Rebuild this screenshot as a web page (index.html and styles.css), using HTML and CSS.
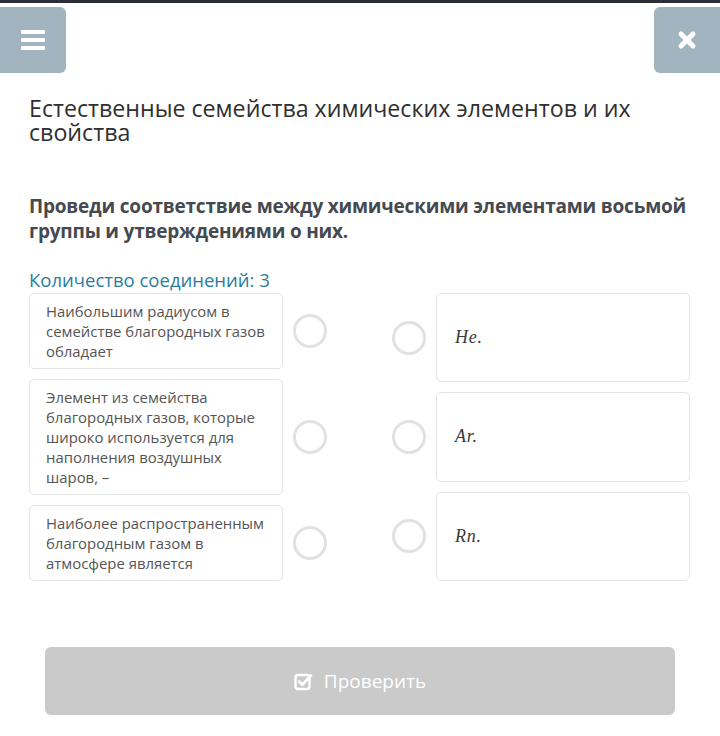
FILE: index.html
```html
<!DOCTYPE html>
<html lang="ru">
<head>
<meta charset="utf-8">
<link rel="stylesheet" href="styles.css">
</head>
<body>
<div class="topline"></div>
<header class="toolbar">
  <button class="tbtn tbtn-left" aria-label="Меню">
    <svg width="24" height="20" viewBox="0 0 24 20"><rect x="0" y="0" width="24" height="4" rx="1" fill="#fff"/><rect x="0" y="8" width="24" height="4" rx="1" fill="#fff"/><rect x="0" y="16" width="24" height="4" rx="1" fill="#fff"/></svg>
  </button>
  <button class="tbtn tbtn-right" aria-label="Закрыть">
    <svg width="20" height="20" viewBox="0 0 20 20"><path d="M4 4 L16 16 M16 4 L4 16" stroke="#fff" stroke-width="5" stroke-linecap="round"/></svg>
  </button>
</header>
<main class="content">
  <h1 class="title">Естественные семейства химических элементов и их свойства</h1>
  <p class="question">Проведи соответствие между химическими элементами восьмой группы и утверждениями о них.</p>
  <div class="count">Количество соединений: 3</div>
  <div class="match">
    <div class="col col-left">
      <div class="item">
        <div class="card card-left">Наибольшим радиусом в семействе благородных газов обладает</div>
        <span class="dot"></span>
      </div>
      <div class="item">
        <div class="card card-left">Элемент из семейства благородных газов, которые широко используется для наполнения воздушных шаров, –</div>
        <span class="dot"></span>
      </div>
      <div class="item">
        <div class="card card-left">Наиболее распространенным благородным газом в атмосфере является</div>
        <span class="dot"></span>
      </div>
    </div>
    <div class="col col-right">
      <div class="item item-grow">
        <span class="dot"></span>
        <div class="card card-right"><span class="math">He.</span></div>
      </div>
      <div class="item item-grow">
        <span class="dot"></span>
        <div class="card card-right"><span class="math">Ar.</span></div>
      </div>
      <div class="item item-grow">
        <span class="dot"></span>
        <div class="card card-right"><span class="math">Rn.</span></div>
      </div>
    </div>
  </div>
  <button class="check">
    <svg width="19" height="19" viewBox="0 0 19 19"><rect x="1.5" y="3" width="14" height="14" rx="2.5" fill="none" stroke="#fff" stroke-width="2.4"/><path d="M5 9.5 L8.3 12.8 L17 3.5" fill="none" stroke="#fff" stroke-width="2.8" stroke-linecap="round" stroke-linejoin="round"/></svg>
    <span>Проверить</span>
  </button>
</main>
</body>
</html>
```

FILE: styles.css
```css
* { box-sizing: border-box; }
html, body { margin: 0; padding: 0; background: #fff; }
body { font-family: "Open Sans", "Noto Sans", sans-serif; color: #333; width: 720px; height: 736px; overflow: hidden; }

.topline { height: 3px; background: #2b2e38; }

.toolbar { display: flex; justify-content: space-between; margin-top: 4px; }
.tbtn { width: 66px; height: 66px; border: 0; padding: 0; background: #a3b4c1; display: flex; align-items: center; justify-content: center; }
.tbtn-left { border-radius: 0 6px 6px 0; }
.tbtn-right { border-radius: 6px 0 0 6px; }

.content { padding: 0 30px 0 29px; }

.title { margin: 23px 0 0; font-size: 23.2px; line-height: 24px; font-weight: 400; color: #2f2f2f; }

.question { margin: 50px 0 0; font-size: 19px; line-height: 25px; font-weight: 700; color: #444a50; letter-spacing: -0.2px; }

.count { margin-top: 23px; font-size: 18.5px; line-height: 26px; color: #2a7ca0; }

.match { display: flex; justify-content: space-between; margin-top: 0; }
.col { display: flex; flex-direction: column; gap: 10px; width: 298px; }
.item { display: flex; align-items: center; gap: 10px; }
.item-grow { flex: 1; }

.card { border: 1px solid #e2e4e6; border-radius: 5px; background: #fff; width: 254px; }
.card-left { padding: 7px 10px 7px 16px; font-size: 14.9px; line-height: 20px; color: #555; }
.card-right { align-self: stretch; display: flex; align-items: center; padding: 0 18px; }

.math { font-family: "Liberation Serif", "DejaVu Serif", serif; font-style: italic; font-size: 18px; color: #3a3a3a; letter-spacing: 0.8px; }

.dot { flex: none; width: 34px; height: 34px; border-radius: 50%; border: 3px solid #dfe2e3; }

.check { display: flex; align-items: center; justify-content: center; gap: 11px; width: 630px; height: 68px; margin: 66px 0 0 16px; border: 0; border-radius: 6px; background: #cacaca; color: #fff; font-family: "Open Sans", "Noto Sans", sans-serif; font-size: 19px; }
.check span { margin-top: -1px; }
```
